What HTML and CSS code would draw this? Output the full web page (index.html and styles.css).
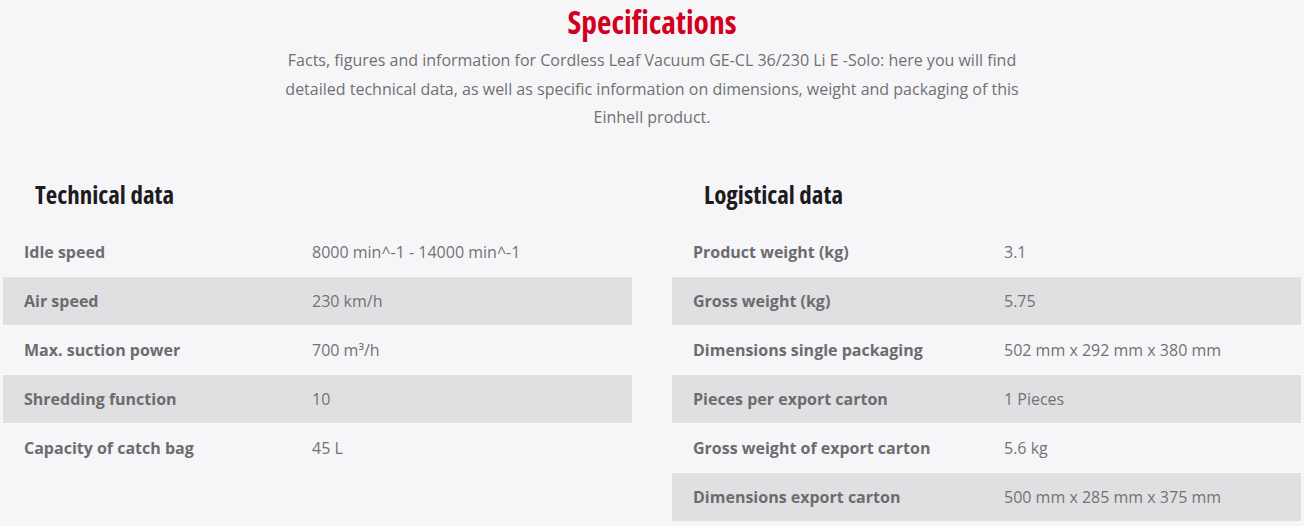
FILE: index.html
```html
<!DOCTYPE html>
<html lang="en">
<head>
<meta charset="utf-8">
<title>Specifications</title>
<link rel="stylesheet" href="styles.css">
</head>
<body>
<section class="specs">
  <header class="specs-head">
    <h2 class="specs-title">Specifications</h2>
    <p class="specs-intro">Facts, figures and information for Cordless Leaf Vacuum GE-CL 36/230 Li E -Solo: here you will find detailed technical data, as well as specific information on dimensions, weight and packaging of this Einhell product.</p>
  </header>
  <div class="specs-cols">
    <div class="spec-group spec-group--tech">
      <h3 class="group-title">Technical data</h3>
      <div class="spec-row"><span class="spec-label">Idle speed</span><span class="spec-value">8000 min^-1 - 14000 min^-1</span></div>
      <div class="spec-row alt"><span class="spec-label">Air speed</span><span class="spec-value">230 km/h</span></div>
      <div class="spec-row"><span class="spec-label">Max. suction power</span><span class="spec-value">700 m³/h</span></div>
      <div class="spec-row alt"><span class="spec-label">Shredding function</span><span class="spec-value">10</span></div>
      <div class="spec-row"><span class="spec-label">Capacity of catch bag</span><span class="spec-value">45 L</span></div>
    </div>
    <div class="spec-group spec-group--log">
      <h3 class="group-title">Logistical data</h3>
      <div class="spec-row"><span class="spec-label">Product weight (kg)</span><span class="spec-value">3.1</span></div>
      <div class="spec-row alt"><span class="spec-label">Gross weight (kg)</span><span class="spec-value">5.75</span></div>
      <div class="spec-row"><span class="spec-label">Dimensions single packaging</span><span class="spec-value">502 mm x 292 mm x 380 mm</span></div>
      <div class="spec-row alt"><span class="spec-label">Pieces per export carton</span><span class="spec-value">1 Pieces</span></div>
      <div class="spec-row"><span class="spec-label">Gross weight of export carton</span><span class="spec-value">5.6 kg</span></div>
      <div class="spec-row alt"><span class="spec-label">Dimensions export carton</span><span class="spec-value">500 mm x 285 mm x 375 mm</span></div>
    </div>
  </div>
</section>
</body>
</html>
```
FILE: styles.css
```css
html, body {
  margin: 0;
  padding: 0;
  background: #f6f6f8;
}
body {
  font-family: "Open Sans", "Liberation Sans", sans-serif;
  color: #6f6f72;
  width: 1304px;
  height: 526px;
  overflow: hidden;
}
.specs {
  padding: 0 3px;
}
.specs-head {
  display: flex;
  flex-direction: column;
  align-items: center;
}
.specs-title {
  margin: 0;
  font-family: "Open Sans", "Liberation Sans Narrow", sans-serif;
  font-stretch: 75%;
  font-weight: 700;
  font-size: 31.5px;
  line-height: 44px;
  color: #d2001e;
}
.specs-intro {
  margin: 2px 0 0;
  width: 745px;
  text-align: center;
  font-size: 16px;
  line-height: 28.5px;
  color: #707073;
}
.specs-cols {
  margin-top: 45px;
  display: grid;
  grid-template-columns: 629px 629px;
  column-gap: 40px;
}
.group-title {
  margin: 0 0 16px;
  font-family: "Open Sans", "Liberation Sans Narrow", sans-serif;
  font-stretch: 75%;
  font-weight: 700;
  font-size: 25px;
  line-height: 34px;
  color: #1c1c1e;
  padding-left: 32px;
}
.spec-row {
  display: grid;
  box-sizing: border-box;
  height: 49px;
  padding-top: 1px;
  border-top: 1px solid #fbfbfc;
  align-items: center;
  font-size: 16px;
}
.spec-group--tech .spec-row {
  grid-template-columns: 309px 1fr;
}
.spec-group--log .spec-row {
  grid-template-columns: 332px 1fr;
}
.spec-row.alt {
  background: #e0e0e2;
}
.spec-label {
  padding-left: 21px;
  font-weight: 700;
  color: #6c6c70;
}
.spec-value {
  color: #727275;
}
```
